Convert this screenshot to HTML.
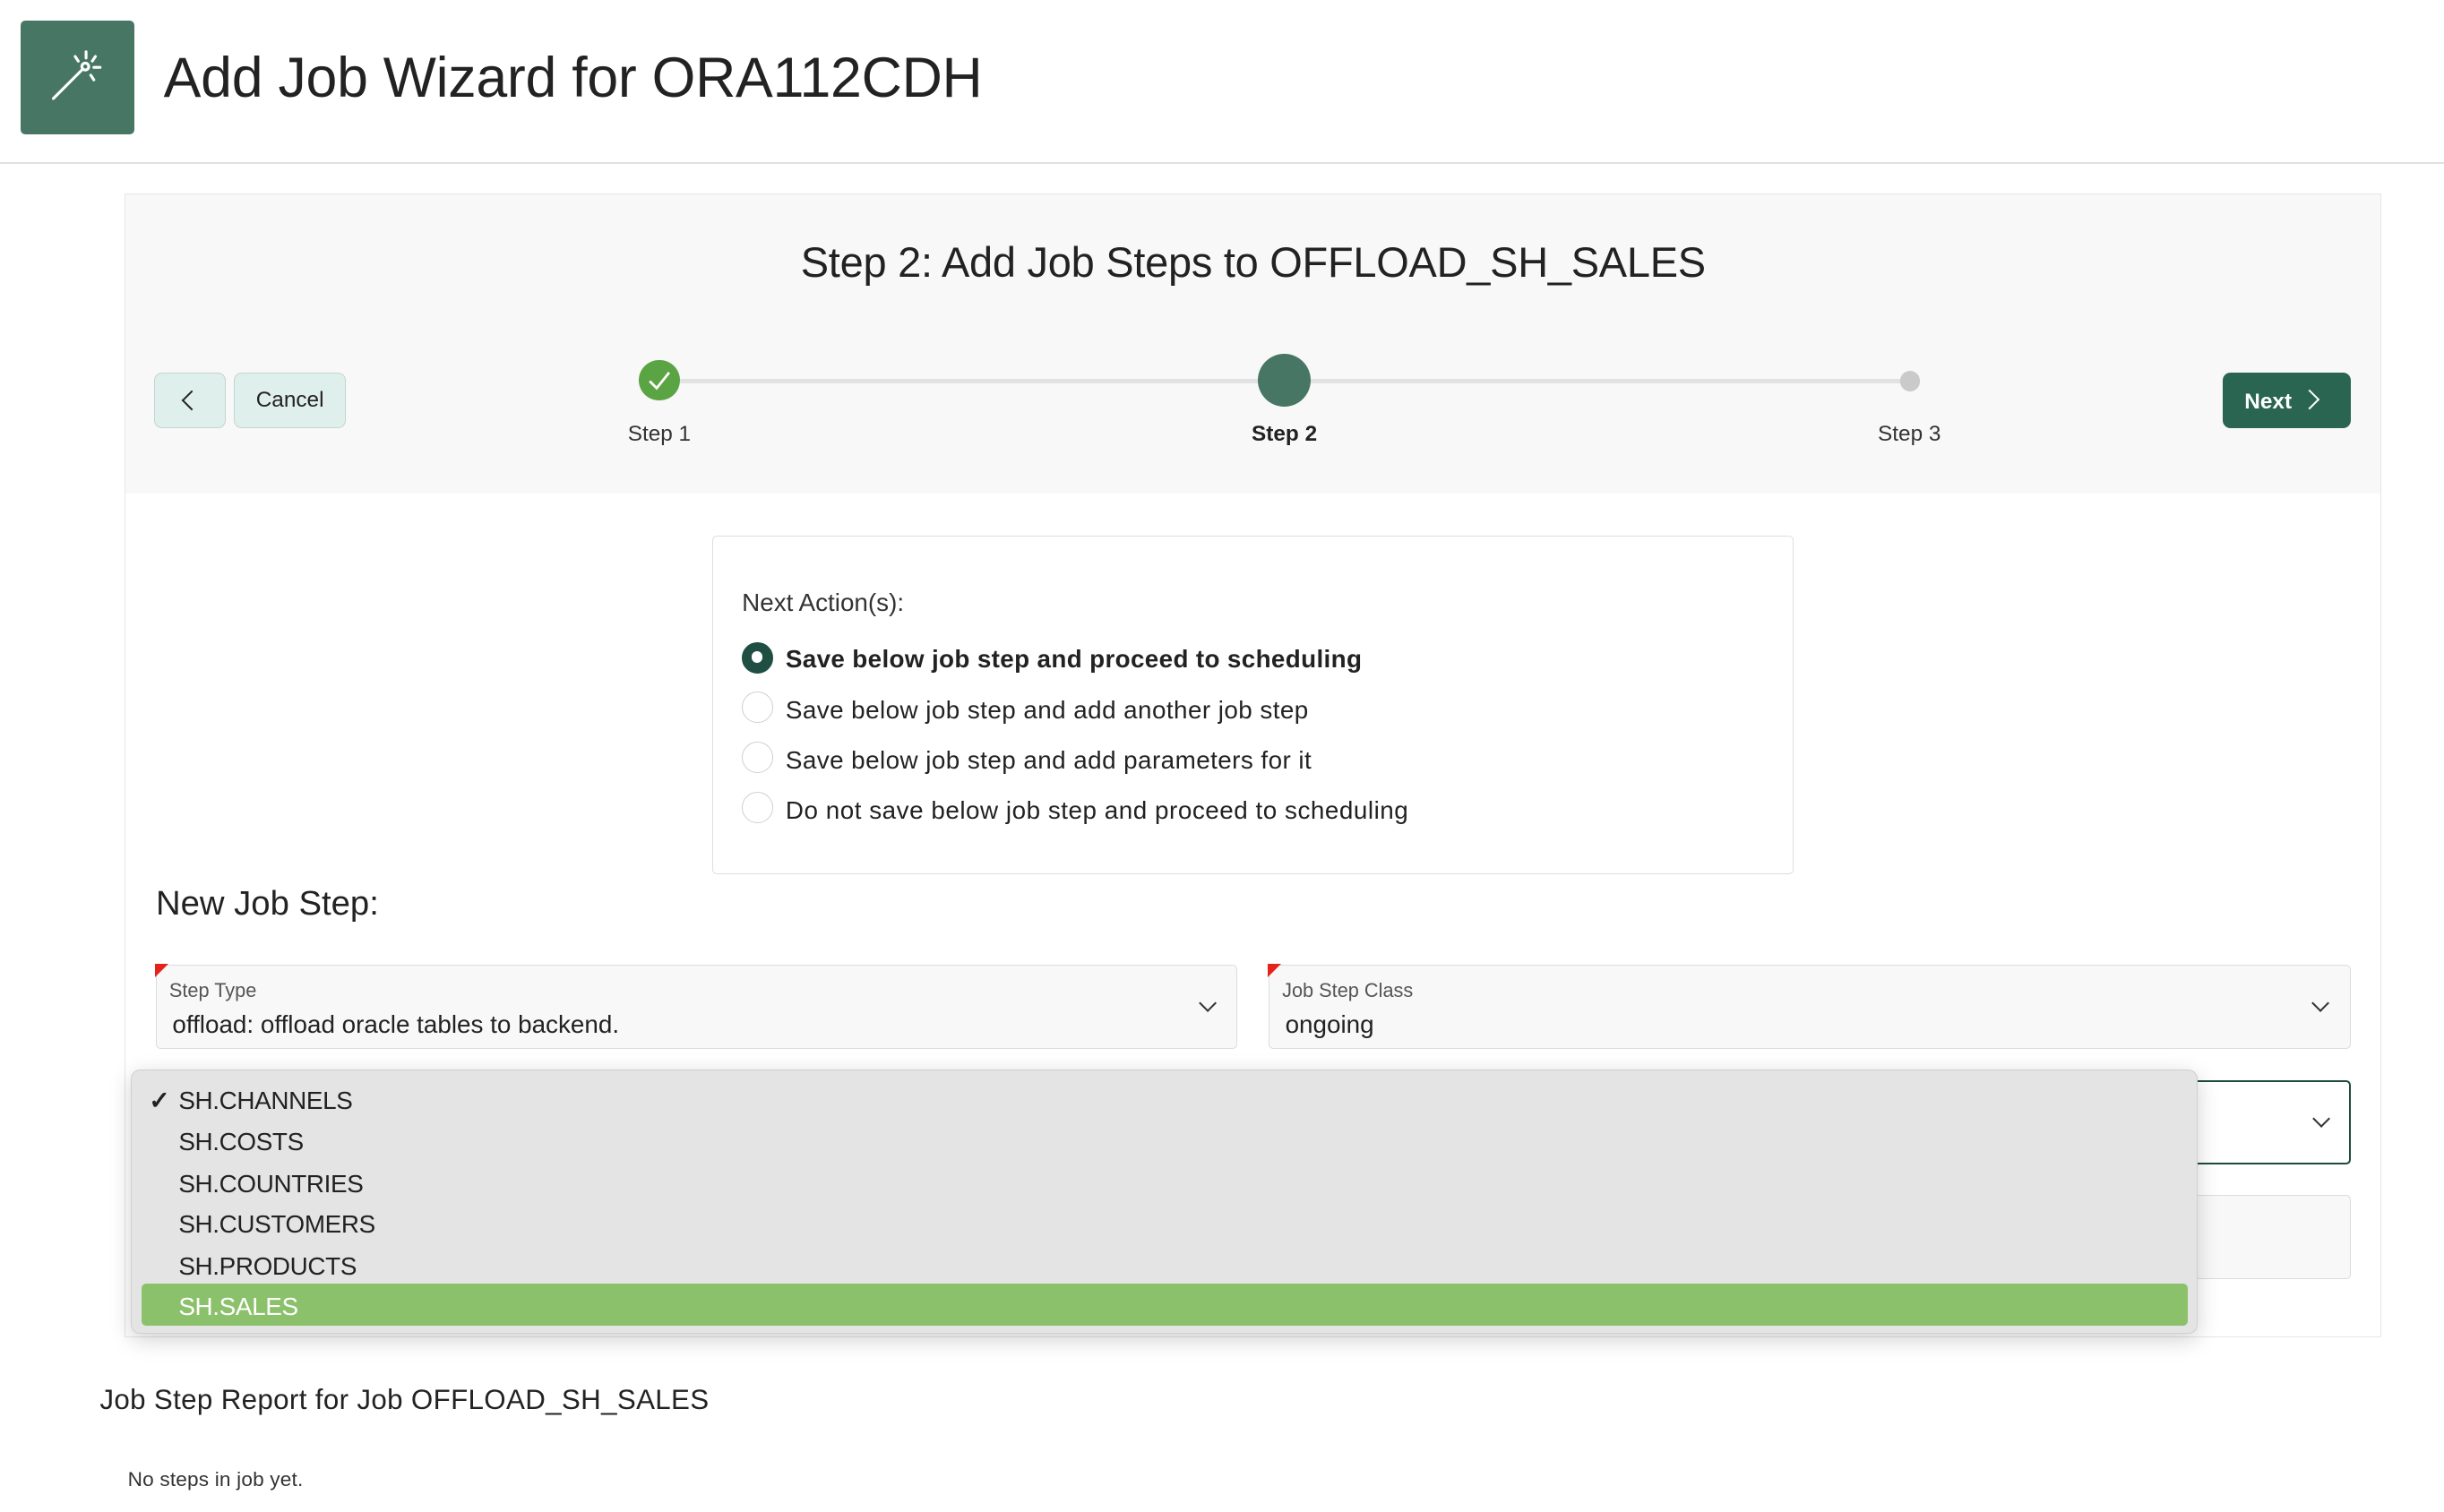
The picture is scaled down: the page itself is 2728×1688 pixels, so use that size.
<!DOCTYPE html>
<html><head><meta charset="utf-8">
<style>
html,body{margin:0;padding:0;background:#fff;}
html{width:2728px;height:1688px;overflow:hidden;}
body{zoom:1.7398;width:1568px;height:970px;position:relative;font-family:"Liberation Sans",sans-serif;color:#222;}
.a{position:absolute;}
.t{position:absolute;white-space:nowrap;line-height:1;}
.radio{position:absolute;width:20px;height:20px;border:1px solid #cfcfcf;border-radius:50%;background:#fff;box-sizing:border-box;}
.field{position:absolute;background:#f8f8f8;border:1px solid #dcdcdc;border-radius:3px;box-sizing:border-box;}
.chev{position:absolute;width:7px;height:7px;border-right:1.3px solid #333;border-bottom:1.3px solid #333;transform:rotate(45deg);}
.red{position:absolute;left:-1px;top:-1px;width:0;height:0;border-top:9px solid #e5231b;border-right:9px solid transparent;}
.item{position:absolute;left:30px;font-size:16px;line-height:1;color:#222;letter-spacing:-0.2px;}
</style></head><body>
<!-- header -->
<div class="a" style="left:13px;top:13px;width:73px;height:73px;background:#477764;border-radius:3px;">
<svg width="73" height="73" viewBox="0 0 73 73"><g stroke="#fff" stroke-width="1.8" fill="none" stroke-linecap="round"><line x1="21" y1="50" x2="40" y2="31"/><circle cx="41.5" cy="29.5" r="2.2"/><line x1="42" y1="20" x2="42" y2="24"/><line x1="35" y1="23" x2="37" y2="26"/><line x1="48" y1="23" x2="46" y2="26"/><line x1="47" y1="30" x2="51" y2="30"/><line x1="45" y1="35" x2="47" y2="38"/></g></svg>
</div>
<div class="t" style="left:105px;top:32px;font-size:36px;color:#222;letter-spacing:-0.15px;">Add Job Wizard for ORA112CDH</div>
<div class="a" style="left:0;top:104px;width:1568px;height:1px;background:#e0e0e0;"></div>

<!-- card -->
<div class="a" style="left:80px;top:124px;width:1448px;height:734px;border:1px solid #e6e6e6;box-sizing:border-box;background:#fff;">
<div class="a" style="left:0;top:0;right:0;height:192px;background:#f8f8f8;"></div>
</div>
<div class="t" style="left:0;width:1608px;text-align:center;top:155px;font-size:27px;color:#222;letter-spacing:-0.15px;">Step 2: Add Job Steps to OFFLOAD_SH_SALES</div>

<div class="a" style="left:99px;top:239px;width:46px;height:36px;background:#dfefeb;border:1px solid #c2d6d0;border-radius:5px;box-sizing:border-box;">
<div class="a" style="left:19px;top:13px;width:8px;height:8px;border-left:1.6px solid #222;border-bottom:1.6px solid #222;transform:rotate(45deg);"></div></div>
<div class="a" style="left:150px;top:239px;width:72px;height:36px;background:#dfefeb;border:1px solid #c2d6d0;border-radius:5px;box-sizing:border-box;font-size:14px;line-height:35px;text-align:center;color:#222;">Cancel</div>

<div class="a" style="left:423px;top:243px;width:802px;height:3px;background:#e2e2e2;"></div>
<div class="a" style="left:410px;top:231px;width:26px;height:26px;border-radius:50%;background:#5aa443;">
<svg width="26" height="26"><path d="M7 13.5 L11.5 18 L19.5 8" stroke="#fff" stroke-width="1.6" fill="none"/></svg></div>
<div class="a" style="left:807px;top:227px;width:34px;height:34px;border-radius:50%;background:#477764;"></div>
<div class="a" style="left:1219px;top:238px;width:13px;height:13px;border-radius:50%;background:#cacaca;"></div>
<div class="t" style="left:383px;width:80px;text-align:center;top:272px;font-size:14px;color:#333;">Step 1</div>
<div class="t" style="left:784px;width:80px;text-align:center;top:272px;font-size:14px;font-weight:bold;color:#222;">Step 2</div>
<div class="t" style="left:1185px;width:80px;text-align:center;top:272px;font-size:14px;color:#333;">Step 3</div>

<div class="a" style="left:1426px;top:239px;width:82px;height:36px;background:#2a6552;border-radius:5px;">
<div class="t" style="left:14px;top:12px;font-size:14px;font-weight:bold;color:#fff;">Next</div>
<div class="a" style="left:51px;top:13px;width:8px;height:8px;border-right:1.6px solid #fff;border-top:1.6px solid #fff;transform:rotate(45deg);"></div></div>

<!-- next action box -->
<div class="a" style="left:457px;top:344px;width:694px;height:217px;border:1px solid #dedede;border-radius:3px;box-sizing:border-box;background:#fff;"></div>
<div class="t" style="left:476px;top:379px;font-size:16px;color:#333;">Next Action(s):</div>
<div class="radio" style="left:476px;top:412px;background:#1f4f42;border-color:#1f4f42;"><div class="a" style="left:5.5px;top:5.5px;width:7px;height:7px;border-radius:50%;background:#fff;"></div></div>
<div class="t" style="left:504px;top:415px;font-size:16px;font-weight:bold;color:#222;letter-spacing:0.2px;">Save below job step and proceed to scheduling</div>
<div class="radio" style="left:476px;top:444px;"></div>
<div class="t" style="left:504px;top:448px;font-size:16px;color:#222;letter-spacing:0.25px;">Save below job step and add another job step</div>
<div class="radio" style="left:476px;top:476px;"></div>
<div class="t" style="left:504px;top:480px;font-size:16px;color:#222;letter-spacing:0.25px;">Save below job step and add parameters for it</div>
<div class="radio" style="left:476px;top:508px;"></div>
<div class="t" style="left:504px;top:512px;font-size:16px;color:#222;letter-spacing:0.3px;">Do not save below job step and proceed to scheduling</div>

<div class="t" style="left:100px;top:569px;font-size:22px;color:#222;">New Job Step:</div>

<div class="field" style="left:100px;top:619px;width:694px;height:54px;"><div class="red"></div>
<div class="t" style="left:8px;top:10px;font-size:12.5px;color:#555;">Step Type</div>
<div class="t" style="left:10px;top:30px;font-size:16px;color:#222;">offload: offload oracle tables to backend.</div>
<div class="chev" style="left:670px;top:20px;"></div></div>
<div class="field" style="left:814px;top:619px;width:694px;height:54px;"><div class="red"></div>
<div class="t" style="left:8px;top:10px;font-size:12.5px;color:#555;">Job Step Class</div>
<div class="t" style="left:10px;top:30px;font-size:16px;color:#222;">ongoing</div>
<div class="chev" style="left:670px;top:20px;"></div></div>
<div class="a" style="left:1300px;top:693px;width:208px;height:54px;border:1.5px solid #1f4a3d;border-radius:3px;box-sizing:border-box;background:#fff;">
<div class="chev" style="left:184px;top:20px;"></div></div>
<div class="field" style="left:1300px;top:767px;width:208px;height:54px;"></div>

<!-- dropdown -->
<div class="a" style="left:84px;top:686px;width:1326px;height:170px;background:#e4e4e4;border:1px solid #d0d0d0;border-radius:6px;box-sizing:border-box;box-shadow:0 4px 14px rgba(0,0,0,0.18);">
<div class="t" style="left:11px;top:12px;font-size:16px;font-weight:bold;">✓</div>
<div class="item" style="top:12px;">SH.CHANNELS</div>
<div class="item" style="top:38px;">SH.COSTS</div>
<div class="item" style="top:65px;">SH.COUNTRIES</div>
<div class="item" style="top:91px;">SH.CUSTOMERS</div>
<div class="item" style="top:118px;">SH.PRODUCTS</div>
<div class="a" style="left:6px;top:137px;width:1313px;height:27px;background:#8cc16b;border-radius:3px;"></div>
<div class="item" style="top:144px;color:#fff;">SH.SALES</div>
</div>

<div class="t" style="left:64px;top:889px;font-size:18px;color:#222;letter-spacing:0.2px;">Job Step Report for Job OFFLOAD_SH_SALES</div>
<div class="t" style="left:82px;top:943px;font-size:13px;color:#333;letter-spacing:0.1px;">No steps in job yet.</div>
</body></html>
